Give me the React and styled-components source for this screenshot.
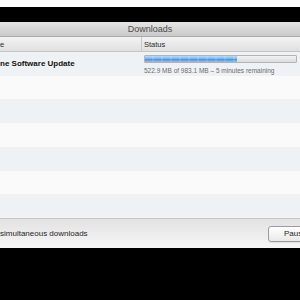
import styled, { createGlobalStyle } from "styled-components"

// Page reset
const GlobalStyle = createGlobalStyle`
  html, body {
    margin: 0;
    padding: 0;
    width: 300px;
    height: 300px;
    overflow: hidden;
    background: #000;
  }
  body {
    font-family: "Liberation Sans", Arial, sans-serif;
  }
`

const Page = styled.div`
  width: 300px;
  height: 300px;
  display: flex;
  flex-direction: column;
  overflow: hidden;
`
const TopStrip = styled.div`
  height: 7px;
  background: #fff;
`
const Band = styled.div`
  height: ${props => props.h}px;
  background: #000;
`
const Window = styled.div`
  display: flex;
  flex-direction: column;
  background: #fafafa;
`
const TitleBar = styled.div`
  height: 15px;
  display: flex;
  align-items: center;
  justify-content: center;
  background: linear-gradient(#e6e6e6, #c9c9c9);
  border-bottom: 1px solid #a9a9a9;
  box-sizing: border-box;
  color: #4a4a4a;
  font-size: 9px;
`
const Header = styled.div`
  height: 15px;
  display: grid;
  grid-template-columns: 141px 1fr;
  background: linear-gradient(#f3f3f3, #e0e0e0);
  border-bottom: 1px solid #c4c4c4;
  box-sizing: border-box;
  font-size: 7.5px;
  color: #2a2a2a;
`
const HeaderCell = styled.div`
  display: flex;
  align-items: center;
  padding-left: ${props => props.pad}px;
  border-left: ${props => props.divider ? "1px solid #c8c8c8" : "none"};
`
const List = styled.div`
  height: 166px;
  display: grid;
  grid-template-rows: repeat(7, 1fr);
`
const Row = styled.div`
  background: ${props => props.odd ? "#fafafa" : "#eff2f5"};
  display: grid;
  grid-template-columns: 141px 1fr;
`
const NameCell = styled.div`
  display: flex;
  align-items: center;
  font-size: 8px;
  font-weight: bold;
  color: #111;
  padding-bottom: 1px;
`
const StatusCell = styled.div`
  display: flex;
  flex-direction: column;
  padding: 3px 3px 0 3px;
  gap: 4px;
`
const Track = styled.div`
  height: 6px;
  border: 1px solid #b4b4b4;
  border-radius: 1px;
  background: linear-gradient(#f2f2f2, #dcdcdc);
  overflow: hidden;
`
const Fill = styled.div`
  height: 100%;
  background: repeating-linear-gradient(90deg, rgba(255,255,255,0) 0 7px, rgba(255,255,255,0.12) 7px 9px),
    linear-gradient(#b9dbfb, #76b1ef 50%, #4a8fe0 55%, #8cc1f4);
`
const StatusText = styled.div`
  font-size: 6.5px;
  color: #6b6b6b;
  white-space: nowrap;
`
const BottomBar = styled.div`
  height: 30px;
  box-sizing: border-box;
  border-top: 1px solid #c6c6c6;
  background: linear-gradient(#e3e1e1, #f7f7f7);
  display: flex;
  align-items: center;
  justify-content: space-between;
  font-size: 8px;
  color: #1e1e1e;
`
const Label = styled.span`
  padding-left: 0px;
`
const Button = styled.div`
  width: 50px;
  height: 16px;
  margin-right: -18px;
  box-sizing: border-box;
  border: 1px solid #9c9c9c;
  border-radius: 3px;
  background: linear-gradient(#ffffff, #e9e9e9);
  box-shadow: 0 1px 0 rgba(0,0,0,0.08);
  font-size: 8px;
  color: #1e1e1e;
  display: flex;
  align-items: center;
  padding-left: 15px;
`

const rows = [0, 1, 2, 3, 4, 5, 6]

const App = () => {
  // bar as drawn in the window
  const progress = 0.61

  return (
    <Page>
      <GlobalStyle />
      <TopStrip />
      <Band h={15} />
      <Window>
        <TitleBar>Downloads</TitleBar>
        <Header>
          <HeaderCell pad={0}>e</HeaderCell>
          <HeaderCell pad={2} divider>Status</HeaderCell>
        </Header>
        <List>
          {rows.map((i) => (
            <Row key={i} odd={i % 2 === 1}>
              {i === 0 ? (
                <>
                  <NameCell>ne Software Update</NameCell>
                  <StatusCell>
                    <Track>
                      <Fill style={{ width: `${progress * 100}%` }} />
                    </Track>
                    <StatusText>522.9 MB of 983.1 MB – 5 minutes remaining</StatusText>
                  </StatusCell>
                </>
              ) : null}
            </Row>
          ))}
        </List>
        <BottomBar>
          <Label>simultaneous downloads</Label>
          <Button>Pause</Button>
        </BottomBar>
      </Window>
    </Page>
  )
}

export default App
